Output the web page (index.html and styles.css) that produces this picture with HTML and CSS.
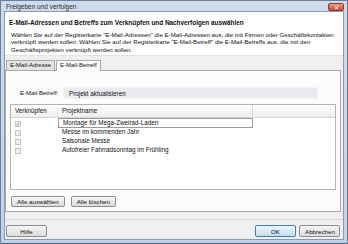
FILE: index.html
```html
<!DOCTYPE html>
<html lang="de">
<head>
  <meta charset="UTF-8">
  <title>Freigeben und verfolgen</title>
  <link rel="stylesheet" href="styles.css">
</head>
<body>
  <div class="window">
    <div class="titlebar">
      <span class="title">Freigeben und verfolgen</span>
      <span class="close">&#x2715;</span>
    </div>
    <div class="client">
      <div class="header">
        <div class="heading">E-Mail-Adressen und Betreffs zum Verknüpfen und Nachverfolgen auswählen</div>
        <p class="desc">Wählen Sie auf der Registerkarte "E-Mail-Adressen" die E-Mail-Adressen aus, die mit Firmen oder Geschäftskontakten<br>verknüpft werden sollen. Wählen Sie auf der Registerkarte "E-Mail-Betreff" die E-Mail-Betreffs aus, die mit den<br>Geschäftsprojekten verknüpft werden sollen.</p>
      </div>

      <div class="tabs">
        <div class="tab">E-Mail-Adresse</div>
        <div class="tab active">E-Mail-Betreff</div>
      </div>
      <div class="panel">
        <div class="subject-row">
          <span class="subject-label">E-Mail-Betreff:</span>
          <div class="subject-field">Projekt aktualisieren</div>
        </div>
        <div class="list">
          <div class="list-head">
            <div class="col-check">Verknüpfen</div>
            <div class="col-name">Projektname</div>
            <div class="col-rest"></div>
          </div>
          <div class="row selected">
            <div class="col-check"><span class="box checked">&#x2713;</span></div>
            <div class="col-name">Montage für Mega-Zweirad-Laden</div>
          </div>
          <div class="row">
            <div class="col-check"><span class="box"></span></div>
            <div class="col-name">Messe im kommenden Jahr</div>
          </div>
          <div class="row">
            <div class="col-check"><span class="box"></span></div>
            <div class="col-name">Saisonale Messe</div>
          </div>
          <div class="row">
            <div class="col-check"><span class="box"></span></div>
            <div class="col-name">Autofreier Fahrradsonntag im Frühling</div>
          </div>
        </div>
        <div class="list-buttons">
          <button class="btn">Alle auswählen</button>
          <button class="btn">Alle löschen</button>
        </div>
      </div>

      <div class="footer">
        <button class="btn wide">Hilfe</button>
        <div class="spacer"></div>
        <button class="btn wide default">OK</button>
        <button class="btn wide">Abbrechen</button>
      </div>
    </div>
  </div>
</body>
</html>
```

FILE: styles.css
```css
html, body { margin: 0; padding: 0; background: #d8e2ee; }
body { font-family: "Liberation Sans", Arial, sans-serif; font-size: 6.3px; color: #111; }

.window { width: 348px; height: 244px; box-sizing: border-box; display: flex; flex-direction: column;
  background: linear-gradient(#cfdbe9, #c3d2e4); border: 1px solid #6a7f98; border-bottom-color: #3f6a86; padding: 0 3px 3px; }

.titlebar { height: 10px; flex: none; display: flex; align-items: center; justify-content: space-between; }
.title { font-size: 6.5px; color: #2a2a2a; padding-left: 2px; }
.close { width: 16px; height: 8px; margin-top: 1px; background: linear-gradient(#e8a08e, #c84a34); border: 1px solid #8e3a2a;
  border-radius: 2px; color: #fff; font-size: 6px; line-height: 8px; text-align: center; box-sizing: border-box; }

.client { flex: 1; display: flex; flex-direction: column; background: #efefef; border: 1px solid #8a9bb0; }

.header { background: #fff; padding: 7px 4px 2px; border-bottom: 1px solid #e2e2e2; }
.heading { font-weight: bold; font-size: 6.4px; line-height: 7px; }
.desc { margin: 5px 0 0 2px; line-height: 7.4px; font-size: 6.15px; }

.tabs { display: flex; padding: 3px 0 0 1px; gap: 1px; }
.tab { height: 9px; line-height: 9px; padding: 0 3px; border: 1px solid #a9a9a9; border-bottom: none; background: #e4e4e4; margin-top: 1px; font-size: 6px; }
.tab.active { background: #fbfbfb; margin-top: 0; height: 10px; position: relative; top: 1px; }

.panel { margin: 0 2px 0 0; background: #fbfbfb; border: 1px solid #a9a9a9; height: 142px; box-sizing: border-box; padding: 15px 4px 0 4px; display: flex; flex-direction: column; }

.subject-row { display: flex; align-items: center; height: 14px; margin-left: 10px; }
.subject-label { width: 43px; flex: none; white-space: nowrap; font-size: 6px; }
.subject-field { width: 255px; height: 12px; line-height: 12px; padding-left: 5px; background: #e9ebee; border: 1px solid #f4f4f4; box-sizing: border-box; }

.list { margin-top: 4px; height: 86px; box-sizing: border-box; border: 1px solid #b4b4b4; background: #fff; }
.list-head { display: flex; height: 12px; line-height: 12px; background: linear-gradient(#fdfdfd, #eeeeee); border-bottom: 1px solid #d4d4d4; }
.list-head .col-name { border-right: 1px solid #dadada; }
.col-check { width: 47px; padding-left: 4px; box-sizing: border-box; flex: none; }
.col-name { width: 195px; padding-left: 4px; box-sizing: border-box; flex: none; }
.col-rest { flex: 1; }

.row { display: flex; height: 9px; line-height: 9px; }
.row.selected .col-name { border: 1px solid #9a9a9a; line-height: 8px; height: 10px; box-sizing: border-box; }
.box { display: inline-block; width: 6px; height: 6px; border: 1px solid #c4c4c4; background: #f0f0f0; vertical-align: middle;
  box-sizing: border-box; font-size: 5px; line-height: 5px; color: #556; text-align: center; }

.list-buttons { display: flex; gap: 6px; margin-top: 6px; padding-left: 1px; }
.btn { font-family: inherit; font-size: 6.2px; height: 11px; padding: 0 5px; line-height: 9px; color: #111;
  background: linear-gradient(#f6f6f6, #dcdcdc); border: 1px solid #8e8e8e; border-radius: 2px; box-sizing: border-box; }

.footer { margin-top: 7px; border-top: 1px solid #d6d6d6; padding: 5px 3px 0 1px; display: flex; gap: 3px; }
.footer .btn.wide { width: 41px; height: 12px; }
.btn.default { background: linear-gradient(#eef5fb, #c5dced); border-color: #3c7fb1; }
.spacer { flex: 1; }
```
